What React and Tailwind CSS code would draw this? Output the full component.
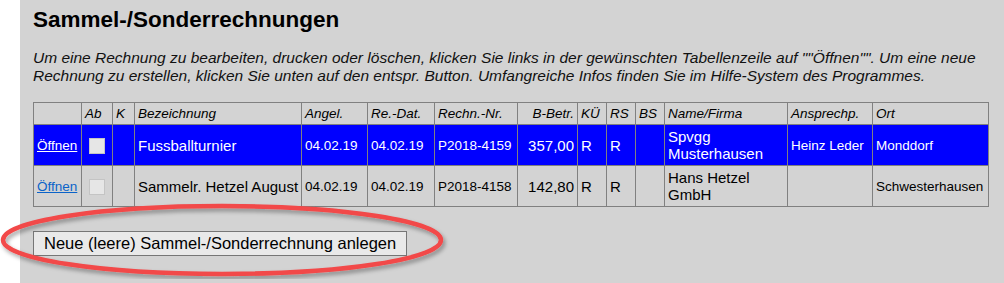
export default function App() {
  const cols = [
    { label: "", w: "w-[48px]" },
    { label: "Ab", w: "w-[31px]" },
    { label: "K", w: "w-[22px]" },
    { label: "Bezeichnung", w: "w-[167px]" },
    { label: "Angel.", w: "w-[66px]" },
    { label: "Re.-Dat.", w: "w-[67px]" },
    { label: "Rechn.-Nr.", w: "w-[83px]" },
    { label: "B-Betr.", w: "w-[60px]", right: true },
    { label: "KÜ", w: "w-[29px]" },
    { label: "RS", w: "w-[29px]" },
    { label: "BS", w: "w-[29px]" },
    { label: "Name/Firma", w: "w-[123px]" },
    { label: "Ansprechp.", w: "w-[85px]" },
    { label: "Ort", w: "w-[116px]" },
  ];

  // Schriftgröße je Datenspalte (ab Bezeichnung)
  const sizes = [
    "text-[15px] whitespace-nowrap",
    "text-[13.5px] whitespace-nowrap",
    "text-[13.5px] whitespace-nowrap",
    "text-[13.5px] whitespace-nowrap",
    "text-[15px] whitespace-nowrap text-right",
    "text-[15px] whitespace-nowrap",
    "text-[15px] whitespace-nowrap",
    "text-[15px] whitespace-nowrap",
    "text-[15px]",
    "text-[13.5px] whitespace-nowrap",
    "text-[13.5px] whitespace-nowrap",
  ];

  const rows = [
    {
      active: true,
      cells: ["Fussballturnier", "04.02.19", "04.02.19", "P2018-4159", "357,00", "R", "R", "", "Spvgg Musterhausen", "Heinz Leder", "Monddorf"],
    },
    {
      active: false,
      cells: ["Sammelr. Hetzel August", "04.02.19", "04.02.19", "P2018-4158", "142,80", "R", "R", "", "Hans Hetzel GmbH", "", "Schwesterhausen"],
    },
  ];

  const cell = "border border-[#808080] px-[3px] align-middle";

  return (
    <div className="flex min-h-[283px] font-['Liberation_Sans',Arial,sans-serif] text-black">
      <div className="w-[20px] shrink-0 bg-white" />
      <div className="relative flex-1 bg-[#d3d3d3] pl-[13px] pr-[15px] pt-[7px] pb-[28px]">
        <h1 className="text-[22.5px] font-bold leading-[26px]">Sammel-/Sonderrechnungen</h1>
        <p className="mt-[16px] text-[15.5px] italic leading-[18px] text-[#111]">
          Um eine Rechnung zu bearbeiten, drucken oder löschen, klicken Sie links in der gewünschten Tabellenzeile auf ""Öffnen"". Um eine neue Rechnung zu erstellen, klicken Sie unten auf den entspr. Button. Umfangreiche Infos finden Sie im Hilfe-System des Programmes.
        </p>

        <table className="mt-[17px] w-[956px] table-fixed border-collapse border border-[#808080] leading-[17px]">
          <thead>
            <tr className="h-[22px]">
              {cols.map((c, i) => (
                <th
                  key={i}
                  className={`${cell} ${c.w} whitespace-nowrap text-[13.5px] font-normal italic ${c.right ? "text-right" : "text-left"}`}
                >
                  {c.label}
                </th>
              ))}
            </tr>
          </thead>
          <tbody>
            {rows.map((r, ri) => (
              <tr key={ri} className={`h-[41px] ${r.active ? "bg-[#0000ff] text-white" : "text-black"}`}>
                <td className={`${cell} text-[13.5px]`}>
                  <a href="#" className={`underline ${r.active ? "text-white" : "text-[#0a63c9]"}`}>
                    Öffnen
                  </a>
                </td>
                <td className={`${cell} text-center`}>
                  <span className="inline-block h-[16px] w-[16px] border border-[#c4c4c4] bg-[#e6e6e6] align-middle" />
                </td>
                <td className={cell} />
                {r.cells.map((v, ci) => (
                  <td key={ci} className={`${cell} ${sizes[ci]}`}>
                    {v}
                  </td>
                ))}
              </tr>
            ))}
          </tbody>
        </table>

        <button
          type="button"
          className="mt-[24px] h-[25px] border border-[#767676] bg-[#e9e9e9] px-[10px] text-[16.5px] leading-[19px] text-black"
        >
          Neue (leere) Sammel-/Sonderrechnung anlegen
        </button>

        <svg
          className="pointer-events-none absolute left-[-20px] top-[203px]"
          width="450"
          height="76"
          viewBox="0 0 450 76"
        >
          <defs>
            <filter id="sh" x="-10%" y="-30%" width="120%" height="160%">
              <feDropShadow dx="2" dy="3" stdDeviation="2" floodColor="#000" floodOpacity="0.35" />
            </filter>
          </defs>
          <ellipse
            cx="222"
            cy="37"
            rx="219"
            ry="34"
            fill="none"
            stroke="#f24848"
            strokeWidth="4.5"
            filter="url(#sh)"
          />
        </svg>
      </div>
    </div>
  );
}
